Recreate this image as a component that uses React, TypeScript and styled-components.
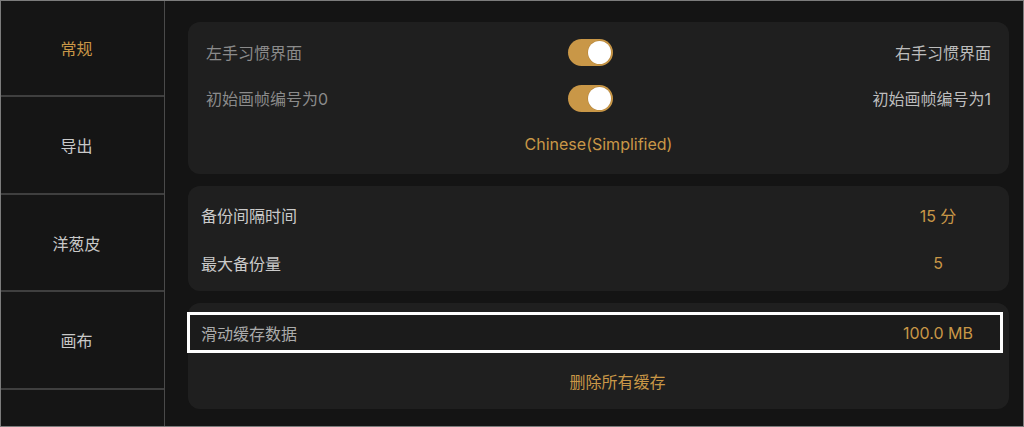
import React from "react";
import styled, { createGlobalStyle } from "styled-components";

const Global = createGlobalStyle`
  html, body { margin: 0; padding: 0; background: #141414; }
  * { box-sizing: border-box; }
`;

const GOLD = "#c99747";
const FONT = `Inter, "Noto Sans CJK SC", sans-serif`;

const Frame = styled.div`
  width: 1024px;
  height: 427px;
  border: 1px solid #7c7c7c;
  background: #141414;
  display: flex;
  font-family: ${FONT};
  font-size: 16px;
  overflow: hidden;
`;

const Sidebar = styled.nav`
  width: 164px;
  flex: none;
  border-right: 1px solid #4a4a4a;
  display: flex;
  flex-direction: column;
  background: #151515;
`;

const NavItem = styled.div<{ $active?: boolean; $h?: number }>`
  height: ${(p) => p.$h ?? 97}px;
  flex: none;
  border-bottom: 2px solid #3f3f3f;
  display: flex;
  align-items: center;
  justify-content: center;
  padding-right: 12px;
  color: ${(p) => (p.$active ? GOLD : "#c9c9c9")};
  font-size: 16px;
`;

const Main = styled.main`
  flex: 1;
  display: flex;
  flex-direction: column;
  gap: 12px;
  padding: 21px 14px 0 23px;
`;

const Panel = styled.section<{ $h: number; $pt?: number }>`
  height: ${(p) => p.$h}px;
  background: #1f1f1f;
  border-radius: 12px;
  padding-top: ${(p) => p.$pt ?? 0}px;
  display: flex;
  flex-direction: column;
`;

const ToggleRow = styled.div`
  height: 46px;
  display: grid;
  grid-template-columns: 362px 45px 1fr;
  align-items: center;
  padding: 0 18px;
`;

const SideLabel = styled.span<{ $dim?: boolean; $right?: boolean }>`
  color: ${(p) => (p.$dim ? "#8b8b8b" : "#bdbdbd")};
  text-align: ${(p) => (p.$right ? "right" : "left")};
`;

const Toggle = styled.div`
  width: 45px;
  height: 27px;
  border-radius: 14px;
  background: ${GOLD};
  display: flex;
  align-items: center;
  justify-content: flex-end;
  padding-right: 2px;
`;

const Knob = styled.div`
  width: 23px;
  height: 23px;
  border-radius: 50%;
  background: #ffffff;
  box-shadow: 0 0 0 0.5px #b07f33;
`;

const CenterRow = styled.div`
  height: 46px;
  display: flex;
  align-items: center;
  justify-content: center;
  color: ${GOLD};
`;

const ValueRow = styled.div`
  height: 48px;
  display: flex;
  align-items: center;
  padding: 0 41px 0 13px;
`;

const Label = styled.span<{ $color?: string }>`
  flex: 1;
  color: ${(p) => p.$color ?? "#cacaca"};
`;

const Value = styled.span`
  width: 60px;
  text-align: center;
  color: ${GOLD};
`;

const Highlight = styled.div`
  height: 41px;
  margin: 0 6px 0 -1px;
  border: 3px solid #ffffff;
  background: #1b1b1b;
  display: flex;
  align-items: center;
  padding: 0 27px 0 11px;
`;

const HValue = styled.span`
  color: ${GOLD};
`;

const DeleteRow = styled.div`
  flex: 1;
  display: flex;
  align-items: center;
  justify-content: center;
  padding-left: 38px;
  color: ${GOLD};
`;

const Spacer = styled.div`
  height: 7px;
`;

export default function App() {
  return (
    <>
      <Global />
      <Frame>
        <Sidebar>
          <NavItem $active $h={96}>常规</NavItem>
          <NavItem $h={98}>导出</NavItem>
          <NavItem>洋葱皮</NavItem>
          <NavItem $h={98}>画布</NavItem>
        </Sidebar>
        <Main>
          <Panel $h={152}>
            <Spacer />
            <ToggleRow>
              <SideLabel $dim>左手习惯界面</SideLabel>
              <Toggle>
                <Knob />
              </Toggle>
              <SideLabel $right>右手习惯界面</SideLabel>
            </ToggleRow>
            <ToggleRow>
              <SideLabel $dim>初始画帧编号为0</SideLabel>
              <Toggle>
                <Knob />
              </Toggle>
              <SideLabel $right>初始画帧编号为1</SideLabel>
            </ToggleRow>
            <CenterRow>Chinese(Simplified)</CenterRow>
          </Panel>
          <Panel $h={105} $pt={5}>
            <ValueRow>
              <Label>备份间隔时间</Label>
              <Value>15 分</Value>
            </ValueRow>
            <ValueRow>
              <Label>最大备份量</Label>
              <Value>5</Value>
            </ValueRow>
          </Panel>
          <Panel $h={106} $pt={9}>
            <Highlight>
              <Label $color="#ababab">滑动缓存数据</Label>
              <HValue>100.0 MB</HValue>
            </Highlight>
            <DeleteRow>删除所有缓存</DeleteRow>
          </Panel>
        </Main>
      </Frame>
    </>
  );
}
